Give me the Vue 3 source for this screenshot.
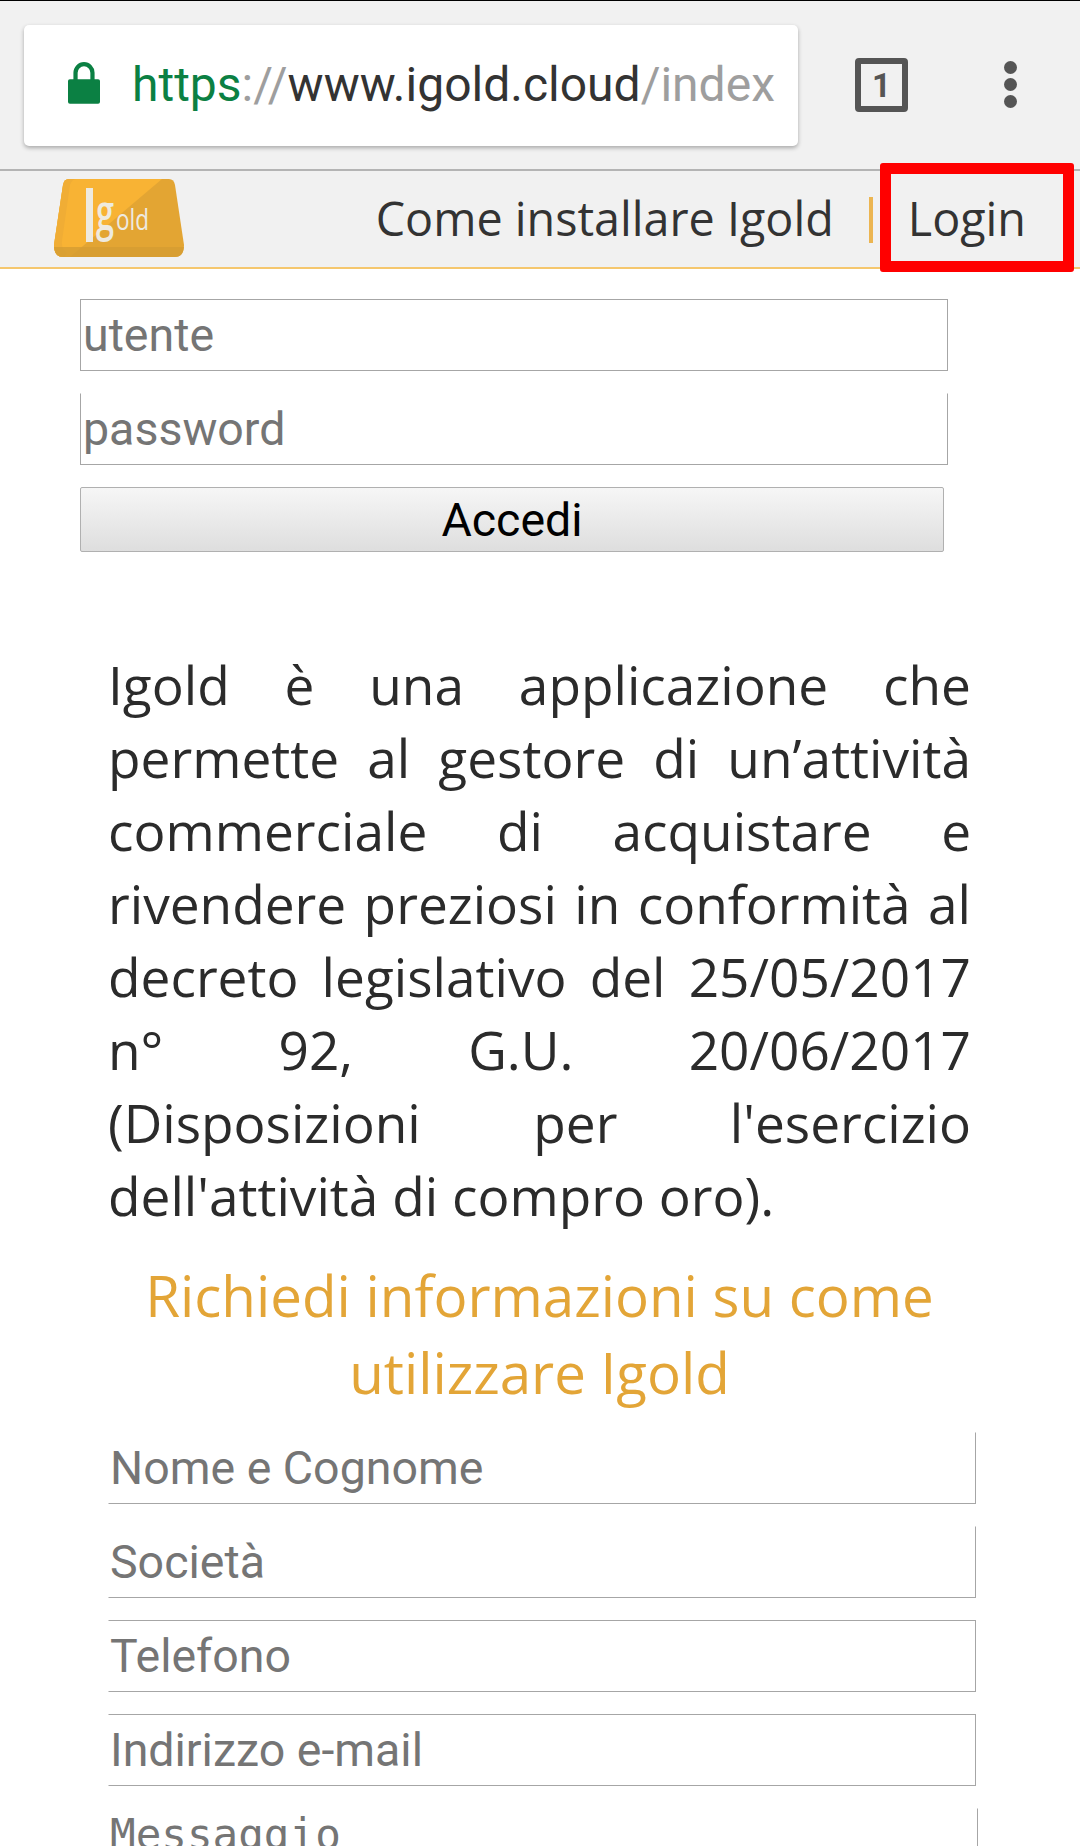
<template>
  <div class="page">
    <div class="toolbar">
      <div class="urlbar">
        <svg class="lock" viewBox="0 0 34 44" width="32" height="42">
          <path d="M2 18h30a2 2 0 0 1 2 2v22a2 2 0 0 1-2 2H2a2 2 0 0 1-2-2V20a2 2 0 0 1 2-2z" fill="#0b8043" />
          <path d="M8 19v-8a9 9 0 0 1 18 0v8" fill="none" stroke="#0b8043" stroke-width="4.5" />
        </svg>
        <div class="url">
          <span class="green">https</span><span class="grey">://</span>www.igold.cloud<span class="grey">/index</span>
        </div>
      </div>
      <div class="tabs">1</div>
      <div class="dots"><i></i><i></i><i></i></div>
    </div>

    <header class="nav">
      <svg class="logo" viewBox="0 0 130 78" width="130" height="78">
        <path d="M15 0h100q5 0 6 6l9 60q0 12-9 12H9q-9 0-9-12L9 6q1-6 6-6z" fill="#e3a533" />
        <path d="M15 0h93L16 78H9q-9 0-9-12L9 6q1-6 6-6z" fill="#f8b334" />
        <path d="M15 0h7q-4 0-6 6L8 62q-1 8 5 12l-3 4H9q-9 0-9-12L9 6q1-6 6-6z" fill="#f0ad35" />
        <path d="M0 68q1 10 9 10h112q8 0 9-10z" fill="#d49c32" opacity="0.8" />
        <rect x="32" y="9" width="7" height="54" fill="#eeeae0" />
        <text x="42" y="51" class="logo-g" textLength="18" lengthAdjust="spacingAndGlyphs">g</text>
        <text x="62" y="51" class="logo-old" textLength="33" lengthAdjust="spacingAndGlyphs">old</text>
      </svg>
      <nav class="links">
        <a>Come installare Igold</a>
        <span class="sep"></span>
        <a>Login</a>
      </nav>
      <div class="mark"></div>
    </header>

    <form class="login">
      <input class="box" type="text" placeholder="utente" />
      <input class="box no-top" type="password" placeholder="password" />
      <button type="button">Accedi</button>
    </form>

    <main class="content">
      <p>
        Igold è una applicazione che permette al gestore di un’attività commerciale di acquistare e rivendere
        preziosi in conformità al decreto legislativo del 25/05/2017 n° 92, G.U. 20/06/2017 (Disposizioni per
        l'esercizio dell'attività di compro oro).
      </p>
      <h2>Richiedi informazioni su come utilizzare Igold</h2>
      <div class="fields">
        <input
          v-for="f in fields"
          :key="f.label"
          class="box no-left"
          :class="{ 'no-top': f.open }"
          type="text"
          :placeholder="f.label"
        />
        <textarea class="msg" placeholder="Messaggio"></textarea>
      </div>
    </main>
  </div>
</template>

<script setup>
const fields = [
  { label: 'Nome e Cognome', open: true },
  { label: 'Società', open: true },
  { label: 'Telefono', open: false },
  { label: 'Indirizzo e-mail', open: false },
]
</script>

<style>
html,
body {
  margin: 0;
  background: #fff;
}
</style>

<style scoped>
.page {
  width: 1080px;
  height: 1846px;
  overflow: hidden;
  position: relative;
  font-family: "Open Sans", sans-serif;
  color: #2b2b2b;
  background: #fff;
}
.toolbar {
  height: 171px;
  box-sizing: border-box;
  border-top: 1px solid #000;
  border-bottom: 2px solid #b4b4b4;
  background: #f1f1f1;
  display: flex;
  align-items: flex-start;
  padding: 24px 0 0 24px;
}
.urlbar {
  width: 774px;
  height: 121px;
  background: #fff;
  border-radius: 5px;
  box-shadow: 0 2px 4px rgba(0, 0, 0, 0.3);
  display: flex;
  align-items: center;
  padding-left: 44px;
  box-sizing: border-box;
  gap: 32px;
  overflow: hidden;
}
.lock {
  flex: none;
  margin-top: -6px;
}
.url {
  font-family: Roboto, sans-serif;
  font-size: 48px;
  color: #333;
  white-space: nowrap;
  margin-bottom: 2px;
}
.green {
  color: #0b8043;
}
.grey {
  color: #9e9e9e;
}
.tabs {
  width: 53px;
  height: 54px;
  box-sizing: border-box;
  margin: 33px 0 0 57px;
  border: 6px solid #555;
  border-radius: 4px;
  font-family: Roboto, sans-serif;
  font-weight: 700;
  font-size: 33px;
  color: #555;
  display: flex;
  align-items: center;
  justify-content: center;
}
.dots {
  display: flex;
  flex-direction: column;
  gap: 4px;
  margin: 36px 0 0 96px;
}
.dots i {
  width: 13px;
  height: 13px;
  border-radius: 50%;
  background: #555;
}
.nav {
  height: 98px;
  box-sizing: border-box;
  background: #f1f1f1;
  border-bottom: 2px solid #f5c76e;
  display: flex;
  align-items: center;
  justify-content: space-between;
  padding: 0 54px 0 54px;
}
.logo {
  margin-top: -2px;
  overflow: visible;
}
.logo-g {
  font-family: "Open Sans", sans-serif;
  font-size: 50px;
  font-weight: 600;
  fill: #eeeae0;
}
.logo-old {
  font-family: "Open Sans", sans-serif;
  font-size: 30px;
  fill: #eeeae0;
}
.links {
  display: flex;
  align-items: center;
  font-size: 46.7px;
  color: #333;
  margin-top: -3px;
}
.sep {
  width: 4px;
  height: 46px;
  background: #ecb551;
  margin: 4px 35px 0 35px;
}
.mark {
  position: absolute;
  left: 880px;
  top: 163px;
  width: 194px;
  height: 109px;
  box-sizing: border-box;
  border: 11px solid #f00;
  border-radius: 3px;
}
.login {
  padding: 30px 0 0 80px;
  display: flex;
  flex-direction: column;
  align-items: flex-start;
}
.box {
  display: block;
  box-sizing: border-box;
  width: 868px;
  height: 72px;
  margin: 0 0 22px;
  padding: 0 2px;
  background: #fff;
  border: 1px solid #a6a6a6;
  border-radius: 0;
  font-family: Roboto, sans-serif;
  font-size: 46.5px;
  outline: none;
}
.box::placeholder,
.msg::placeholder {
  color: #757575;
  opacity: 1;
}
.no-top {
  border-top-color: transparent;
}
.no-left {
  border-left-color: transparent;
  padding: 0 0 0 1px;
}
button {
  width: 864px;
  height: 65px;
  margin-top: 0;
  padding: 0;
  border: 1px solid #b0b0b0;
  border-radius: 2px;
  background: linear-gradient(#f6f6f6, #dedede);
  font-family: Roboto, sans-serif;
  font-size: 46.5px;
  color: #000;
}
.content {
  padding: 0 0 0 108px;
}
p {
  width: 863px;
  margin: 96px 0 0;
  font-size: 53.2px;
  line-height: 73px;
  text-align: justify;
}
h2 {
  width: 863px;
  margin: 25px 0 0;
  font-size: 56.5px;
  font-weight: 400;
  line-height: 77px;
  text-align: center;
  color: #e3a537;
}
.fields {
  margin-top: 21px;
}
.fields .box {
  width: 868px;
}
.msg {
  display: block;
  box-sizing: border-box;
  width: 870px;
  height: 120px;
  padding: 0 0 0 1px;
  background: #fff;
  border: 1px solid transparent;
  border-right-color: #a6a6a6;
  border-radius: 0;
  font-family: "DejaVu Sans Mono", monospace;
  font-size: 42.6px;
  outline: none;
  resize: none;
}
</style>
